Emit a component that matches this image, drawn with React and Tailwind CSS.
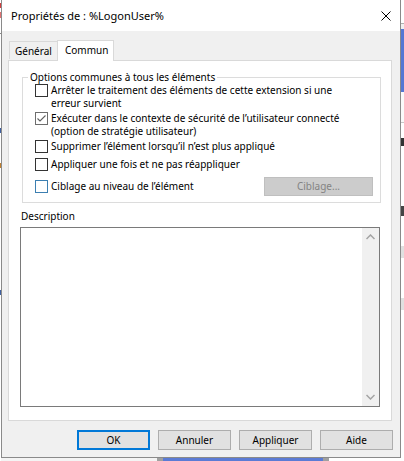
import React from 'react';

const font = { fontFamily: '"Noto Sans", "Open Sans", sans-serif' };

function CheckRow({ checked, blue, children }) {
  return (
    <div className="flex items-start gap-[3px]">
      <div
        className={
          'w-[13px] h-[13px] shrink-0 border bg-white flex items-center justify-center ' +
          (blue ? 'border-[#3c7fb1]' : checked ? 'border-[#6d6d6d]' : 'border-[#333333]')
        }
      >
        {checked && (
          <svg width="11" height="11" viewBox="0 0 11 11">
            <polyline points="1.5,5.5 4,8 9.5,2.5" fill="none" stroke="#606060" strokeWidth="1.1" />
          </svg>
        )}
      </div>
      <div className="leading-[13px] text-black whitespace-nowrap">{children}</div>
    </div>
  );
}

function Button({ children, primary }) {
  return (
    <div
      className={
        'w-[73px] h-[20px] flex items-center justify-center bg-[#e1e1e1] text-black ' +
        (primary ? 'border-2 border-[#0078d7]' : 'border border-[#adadad]')
      }
    >
      {children}
    </div>
  );
}

export default function App() {
  return (
    <div className="flex w-[404px] h-[461px] overflow-hidden bg-white text-[10px]" style={font}>
      {/* left edge of the window behind */}
      <div className="w-px flex flex-col bg-white">
        <div className="h-[3px]" />
        <div className="h-[5px] bg-[#d04040]" />
        <div className="h-[4px]" />
        <div className="h-[6px] bg-[#e07070]" />
        <div className="h-[15px]" />
        <div className="h-px bg-[#888]" />
        <div className="h-[94px]" />
        <div className="h-[5px] bg-[#4060a0]" />
        <div className="h-[30px]" />
        <div className="h-[5px] bg-[#c08030]" />
        <div className="h-[122px]" />
        <div className="h-[5px] bg-[#4060a0]" />
      </div>

      <div className="flex flex-col w-[400px]">
        {/* dialog */}
        <div className="h-[458px] border-x border-b border-[#8a8a8a] bg-[#f0f0f0] flex flex-col">
          <div className="h-[31px] bg-white flex items-center justify-between pl-[9px] pr-[9px] pt-[2px]">
            <span className="text-black text-[11px]">Propriétés de : %LogonUser%</span>
            <svg width="10" height="10" viewBox="0 0 10 10" className="mt-[-1px]">
              <path d="M0.5 0.5 L9.5 9.5 M9.5 0.5 L0.5 9.5" stroke="#000" strokeWidth="1" />
            </svg>
          </div>

          {/* tabs */}
          <div className="flex items-end h-[21px] mt-[8px] ml-[7px] relative z-10">
            <div className="w-[48px] h-[18px] border-t border-l border-[#d9d9d9] bg-[#f0f0f0] pl-[5px] leading-[18px] mb-[1px]">
              Général
            </div>
            <div className="w-[57px] h-[21px] border-t border-x border-[#d9d9d9] bg-white pl-[7px] leading-[19px] mb-[-1px]">
              Commun
            </div>
          </div>

          {/* panel */}
          <div className="ml-[6px] w-[384px] h-[361px] border border-[#d9d9d9] bg-white flex flex-col">
            <fieldset className="ml-[13px] mt-[10px] w-[359px] border border-[#dcdcdc]">
              <legend className="ml-[5px] px-[2px] leading-[13px]">Options communes à tous les éléments</legend>
              <div className="pl-[12px] pr-[7px] pb-[6px] flex flex-col">
                <CheckRow>
                  Arrêter le traitement des éléments de cette extension si une
                  <br />
                  erreur survient
                </CheckRow>
                <div className="mt-[2px]">
                  <CheckRow checked>
                    Exécuter dans le contexte de sécurité de l’utilisateur connecté
                    <br />
                    (option de stratégie utilisateur)
                  </CheckRow>
                </div>
                <div className="mt-[2px]">
                  <CheckRow>Supprimer l’élément lorsqu’il n’est plus appliqué</CheckRow>
                </div>
                <div className="mt-[5px]">
                  <CheckRow>Appliquer une fois et ne pas réappliquer</CheckRow>
                </div>
                <div className="mt-[6px] h-[19px] flex items-center justify-between">
                  <CheckRow blue>Ciblage au niveau de l’élément</CheckRow>
                  <div className="w-[109px] h-[19px] bg-[#cccccc] border border-[#bfbfbf] text-[#838383] flex items-center justify-center">
                    Ciblage...
                  </div>
                </div>
              </div>
            </fieldset>

            <div className="ml-[12px] mt-[7px] leading-[13px]">Description</div>
            <div className="ml-[11px] mt-[4px] w-[360px] h-[180px] border border-[#7a7a7a] flex justify-end">
              <div className="w-[17px] h-full bg-[#f0f0f0] flex flex-col justify-between items-center py-[6px]">
                <svg width="9" height="6" viewBox="0 0 9 6">
                  <polyline points="0.5,5 4.5,1 8.5,5" fill="none" stroke="#a3a3a3" strokeWidth="1.5" />
                </svg>
                <svg width="9" height="6" viewBox="0 0 9 6">
                  <polyline points="0.5,1 4.5,5 8.5,1" fill="none" stroke="#a3a3a3" strokeWidth="1.5" />
                </svg>
              </div>
            </div>
          </div>

          {/* buttons */}
          <div className="flex justify-end gap-[8px] pr-[7px] mt-[9px]">
            <Button primary>OK</Button>
            <Button>Annuler</Button>
            <Button>Appliquer</Button>
            <Button>Aide</Button>
          </div>
        </div>

        {/* window behind, below the dialog */}
        <div className="h-[3px] flex">
          <div className="w-[156px] bg-[#f4f4f4]" />
          <div className="w-[6px] bg-[#a0a0a0]" />
          <div className="w-[160px] bg-[#5b7bd5]" />
          <div className="w-[6px] bg-[#a0a0a0]" />
          <div className="flex-1 bg-white" />
        </div>
      </div>

      {/* right edge of the window behind */}
      <div className="w-[3px] flex flex-col">
        <div className="h-[23px] bg-white" />
        <div className="h-px bg-[#b0b0b0]" />
        <div className="h-[5px] bg-[#f0f0f0]" />
        <div className="h-[63px] bg-[#5477d4]" />
        <div className="h-[30px] bg-[#fafafa]" />
        <div className="h-px bg-[#c8c8c8]" />
        <div className="h-[15px] bg-white" />
        <div className="h-[8px] bg-[#333]" />
        <div className="h-[60px] bg-white" />
        <div className="h-[10px] bg-[#444]" />
        <div className="h-[30px] bg-white" />
        <div className="h-[12px] bg-[#e0e0e0]" />
        <div className="h-[40px] bg-white" />
        <div className="h-[12px] bg-[#e0e0e0]" />
        <div className="flex-1 bg-white" />
      </div>
    </div>
  );
}
